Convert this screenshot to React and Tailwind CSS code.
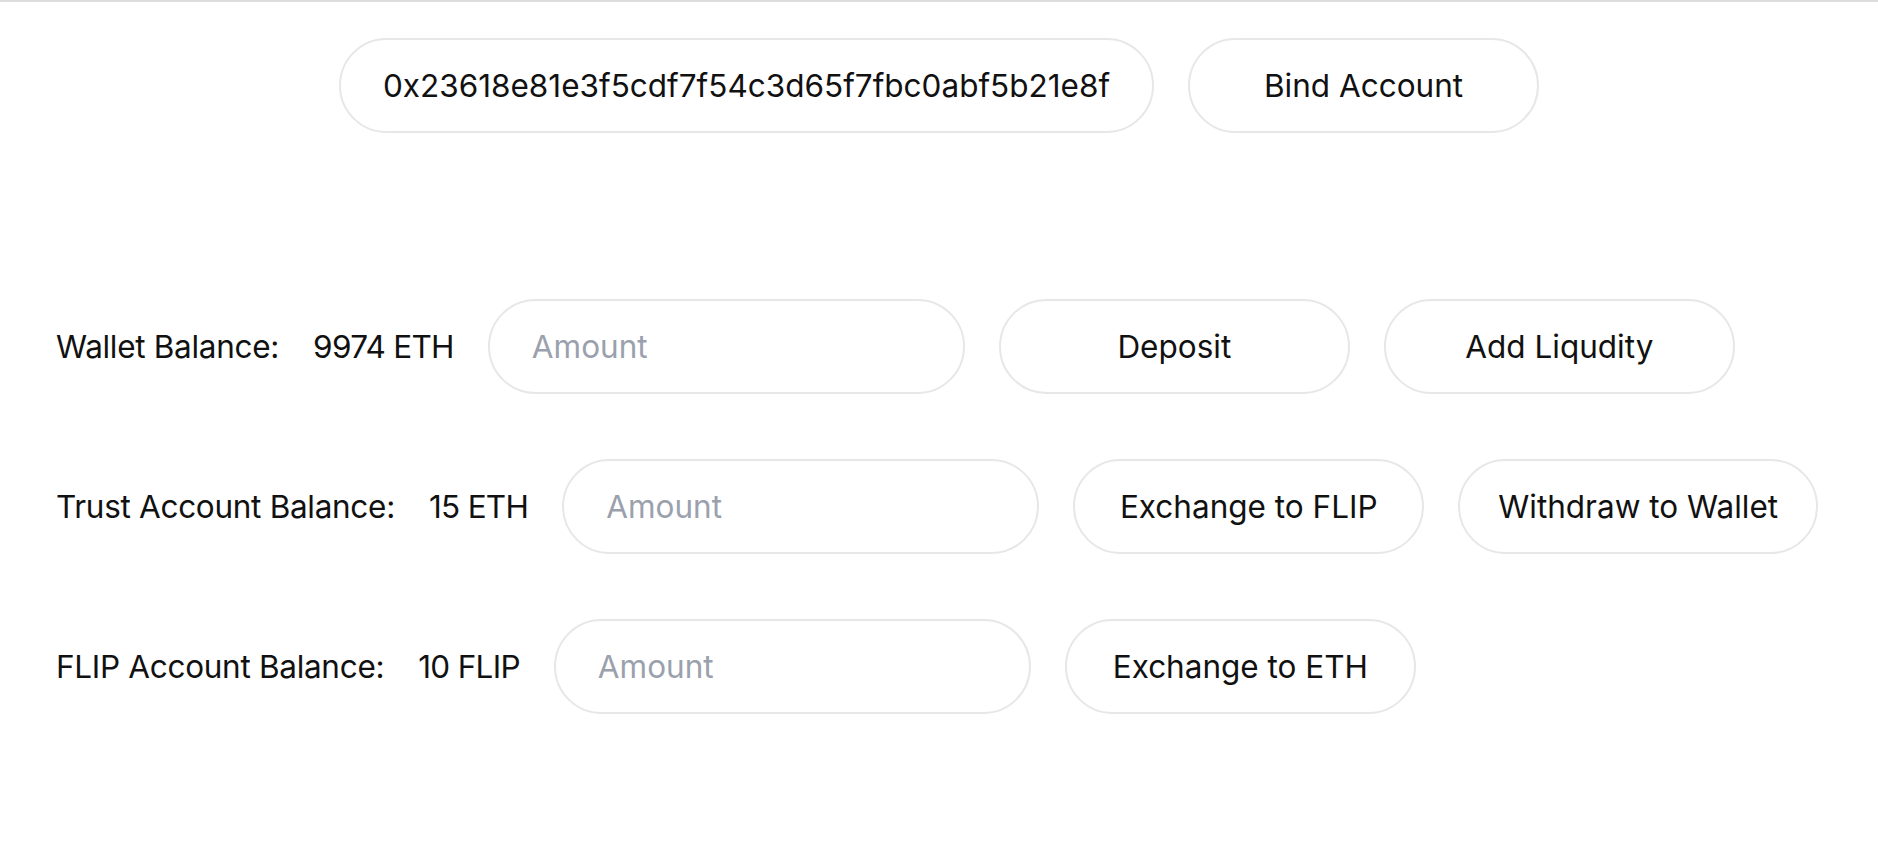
const pill = "h-[95px] rounded-full border-2 border-[#e7e7e7] bg-white text-[31.5px] text-[#111] flex items-center justify-center";

function ActionButton({ children }) {
  return <button className={`${pill} min-w-[351px] px-[38px] whitespace-nowrap`}>{children}</button>;
}

function AmountInput() {
  return (
    <input
      placeholder="Amount"
      className="h-[95px] w-[477px] rounded-full border-2 border-[#e7e7e7] bg-white pl-[42px] text-[31.5px] text-[#111] placeholder:text-[#9aa1ad] outline-none"
    />
  );
}

function BalanceRow({ label, value, actions }) {
  return (
    <div className="flex items-center gap-[34px]">
      <span className="text-[31.5px] text-[#111] whitespace-nowrap tracking-[-0.3px]">{label}</span>
      <span className="text-[31.5px] text-[#111] whitespace-nowrap tracking-[-0.7px]">{value}</span>
      <AmountInput />
      {actions.map((a) => (
        <ActionButton key={a}>{a}</ActionButton>
      ))}
    </div>
  );
}

export default function App() {
  return (
    <div className="min-h-screen bg-white border-t-2 border-[#dcdcdc]" style={{ fontFamily: "Inter, 'Noto Sans', sans-serif" }}>
      <div className="flex justify-center gap-[34px] pt-[36px]">
        <div className={`${pill} px-[42px]`}>0x23618e81e3f5cdf7f54c3d65f7fbc0abf5b21e8f</div>
        <ActionButton>Bind Account</ActionButton>
      </div>
      <div className="flex flex-col gap-[65px] pl-[56px] pt-[166px]">
        <BalanceRow label="Wallet Balance:" value="9974 ETH" actions={["Deposit", "Add Liqudity"]} />
        <BalanceRow label="Trust Account Balance:" value="15 ETH" actions={["Exchange to FLIP", "Withdraw to Wallet"]} />
        <BalanceRow label="FLIP Account Balance:" value="10 FLIP" actions={["Exchange to ETH"]} />
      </div>
    </div>
  );
}
